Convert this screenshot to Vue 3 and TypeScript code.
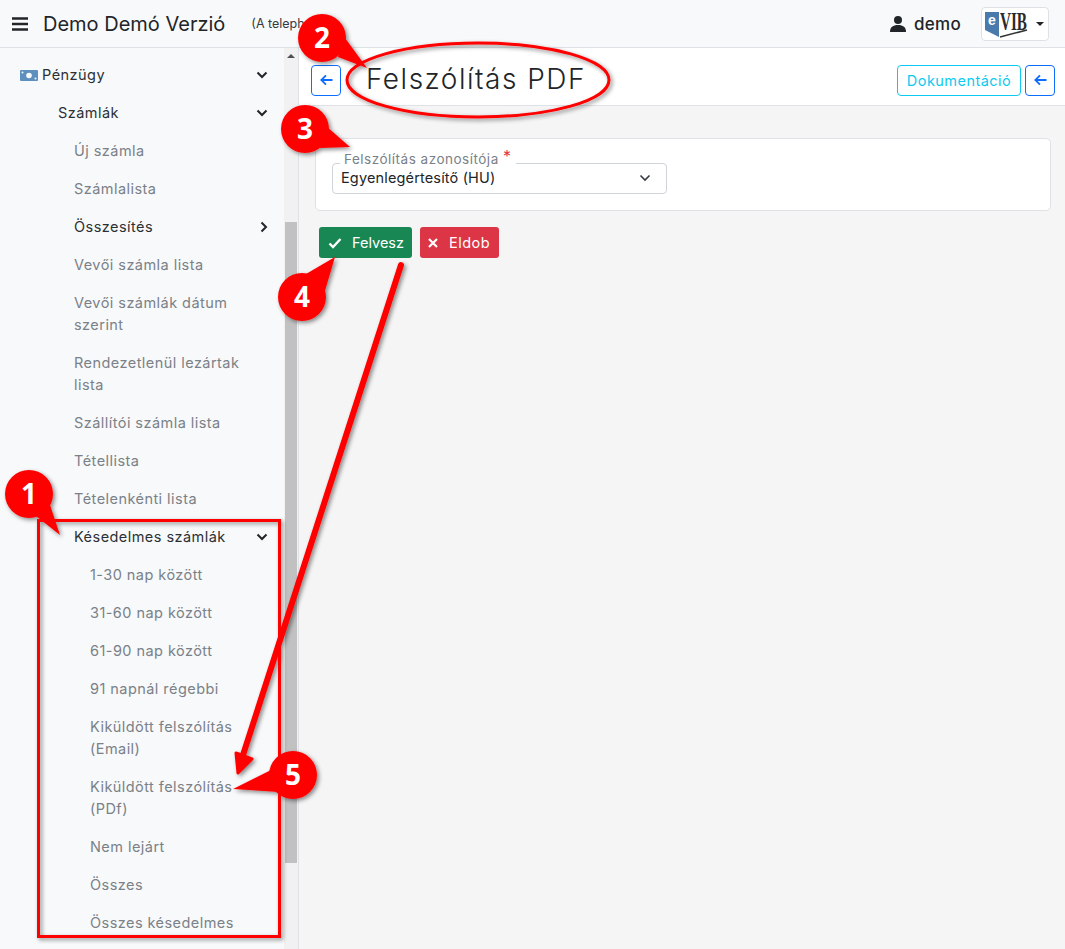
<script setup lang="ts">
interface Item { label: string; level: number; tone: 'dark' | 'muted'; chevron?: 'down' | 'right'; icon?: boolean; tall?: boolean }
const items: Item[] = [
  { label: 'Pénzügy', level: 0, tone: 'dark', chevron: 'down', icon: true },
  { label: 'Számlák', level: 1, tone: 'dark', chevron: 'down' },
  { label: 'Új számla', level: 2, tone: 'muted' },
  { label: 'Számlalista', level: 2, tone: 'muted' },
  { label: 'Összesítés', level: 2, tone: 'dark', chevron: 'right' },
  { label: 'Vevői számla lista', level: 2, tone: 'muted' },
  { label: 'Vevői számlák dátum szerint', level: 2, tone: 'muted', tall: true },
  { label: 'Rendezetlenül lezártak lista', level: 2, tone: 'muted', tall: true },
  { label: 'Szállítói számla lista', level: 2, tone: 'muted' },
  { label: 'Tétellista', level: 2, tone: 'muted' },
  { label: 'Tételenkénti lista', level: 2, tone: 'muted' },
  { label: 'Késedelmes számlák', level: 2, tone: 'dark', chevron: 'down' },
  { label: '1-30 nap között', level: 3, tone: 'muted' },
  { label: '31-60 nap között', level: 3, tone: 'muted' },
  { label: '61-90 nap között', level: 3, tone: 'muted' },
  { label: '91 napnál régebbi', level: 3, tone: 'muted' },
  { label: 'Kiküldött felszólítás (Email)', level: 3, tone: 'muted', tall: true },
  { label: 'Kiküldött felszólítás (PDf)', level: 3, tone: 'muted', tall: true },
  { label: 'Nem lejárt', level: 3, tone: 'muted' },
  { label: 'Összes', level: 3, tone: 'muted' },
  { label: 'Összes késedelmes', level: 3, tone: 'muted' }
]
interface Badge { n: string; cx: number; cy: number; tip: string }
const badges: Badge[] = [
  { n: '1', cx: 29, cy: 494, tip: '50,505 60,535 36,516' },
  { n: '2', cx: 322, cy: 38, tip: '345,38 367,68 338,57' },
  { n: '3', cx: 305, cy: 129, tip: '326,126 350,147 320,148' },
  { n: '4', cx: 302, cy: 297, tip: '306,274 335,257 324,294' },
  { n: '5', cx: 293, cy: 775, tip: '271,770 233,789 279,792' }
]
</script>

<template>
  <div class="page">
    <header class="topbar">
      <svg class="burger" viewBox="0 0 16 14" width="16" height="14"><path d="M0 1.5h16M0 7h16M0 12.500h16" stroke="#212529" stroke-width="2.400" /></svg>
      <span class="brand">Demo Demó Verzió</span>
      <span class="tagline">(A teleph</span>
      <span class="spacer"></span>
      <svg class="person" viewBox="0 0 16 16" width="16" height="16"><circle cx="8" cy="4" r="4" fill="#212529" /><path d="M0 16c0-5 3-7 8-7s8 2 8 7z" fill="#212529" /></svg>
      <span class="username">demo</span>
      <div class="logo-btn">
        <svg class="logo" viewBox="0 0 44 30" width="44" height="30">
          <path d="M0 3h14v25L0 21z" fill="#4a79ab" />
          <text x="3" y="16" class="logo-e">e</text>
          <text x="15" y="21" class="logo-vib" textLength="27" lengthAdjust="spacingAndGlyphs">VIB</text>
          <path d="M15 28L42 21" stroke="#333" stroke-width="1.500" />
        </svg>
        <i class="caret"></i>
      </div>
    </header>

    <div class="body">
      <aside class="sidebar">
        <nav class="menu">
          <div
            v-for="item in items"
            :key="item.label"
            class="row"
            :class="[`lvl${item.level}`, item.tone, { tall: item.tall }]"
          >
            <svg v-if="item.icon" class="money" viewBox="0 0 18 13" width="18" height="13">
              <rect y="1" width="18" height="11" rx="1" fill="#5d8fbf" />
              <circle cx="9" cy="6.500" r="2.800" fill="#f8f9fa" />
              <circle cx="2.500" cy="3.500" r="1" fill="#f8f9fa" />
              <circle cx="15.500" cy="9.500" r="1" fill="#f8f9fa" />
            </svg>
            <span class="row-label">{{ item.label }}</span>
            <svg v-if="item.chevron === 'down'" class="chev" viewBox="0 0 12 8" width="12" height="8"><path d="M1.500 1.500L6 6l4.500-4.500" fill="none" stroke="#212529" stroke-width="2" /></svg>
            <svg v-if="item.chevron === 'right'" class="chev" viewBox="0 0 8 12" width="8" height="12"><path d="M1.500 1.500L6 6l-4.500 4.500" fill="none" stroke="#212529" stroke-width="2" /></svg>
          </div>
        </nav>
        <div class="scrollbar">
          <i class="scroll-up"></i>
          <div class="thumb"></div>
        </div>
      </aside>

      <main class="main">
        <div class="titlebar">
          <button class="icon-btn" aria-label="Vissza">
            <svg viewBox="0 0 13 12" width="13" height="12"><path d="M12.500 6H1.500M6 1.300L1.300 6 6 10.700" fill="none" stroke="#0d6efd" stroke-width="1.800" /></svg>
          </button>
          <h1 class="title">Felszólítás PDF</h1>
          <span class="spacer"></span>
          <button class="doc-btn">Dokumentáció</button>
          <button class="icon-btn" aria-label="Vissza">
            <svg viewBox="0 0 13 12" width="13" height="12"><path d="M12.500 6H1.500M6 1.300L1.300 6 6 10.700" fill="none" stroke="#0d6efd" stroke-width="1.800" /></svg>
          </button>
        </div>

        <div class="content">
          <section class="card">
            <div class="field">
              <label class="float-label">Felszólítás azonosítója <em>*</em></label>
              <div class="select">
                <span>Egyenlegértesítő (HU)</span>
                <svg viewBox="0 0 12 8" width="12" height="8"><path d="M1.500 1.500L6 6l4.500-4.500" fill="none" stroke="#343a40" stroke-width="1.600" /></svg>
              </div>
            </div>
          </section>
          <div class="actions">
            <button class="btn ok">
              <svg viewBox="0 0 14 12" width="14" height="12"><path d="M1.500 6.500L5 10l7.500-8" fill="none" stroke="#fff" stroke-width="2.400" /></svg>
              <span>Felvesz</span>
            </button>
            <button class="btn cancel">
              <svg viewBox="0 0 10 10" width="10" height="10"><path d="M1 1l8 8M9 1l-8 8" fill="none" stroke="#fff" stroke-width="2.200" /></svg>
              <span class="wide">Eldob</span>
            </button>
          </div>
        </div>
      </main>
    </div>

    <svg class="notes" viewBox="0 0 1065 949" width="1065" height="949">
      <defs>
        <filter id="sh" x="-20%" y="-20%" width="140%" height="140%">
          <feDropShadow dx="2" dy="2" stdDeviation="2" flood-color="#000" flood-opacity="0.45" />
        </filter>
      </defs>
      <g filter="url(#sh)">
        <rect x="38.500" y="520.500" width="241" height="416" fill="none" stroke="#f00" stroke-width="3" />
        <ellipse cx="478" cy="80" rx="131" ry="37" fill="none" stroke="#f00" stroke-width="3" />
        <path d="M401 265L243 755" stroke="#f00" stroke-width="6" stroke-linecap="round" />
        <polygon points="238,773 236,753 252,759" fill="#f00" stroke="#f00" stroke-width="3" stroke-linejoin="round" />
        <g v-for="b in badges" :key="b.n">
          <polygon :points="b.tip" fill="#f00" />
          <circle :cx="b.cx" :cy="b.cy" r="24" fill="#f00" />
        </g>
      </g>
      <text v-for="b in badges" :key="'t' + b.n" :x="b.cx" :y="b.cy + 10" class="badge-no">{{ b.n }}</text>
    </svg>
  </div>
</template>

<style>
html, body { margin: 0; padding: 0; }
</style>

<style scoped>
.page {
  position: relative;
  width: 1065px;
  height: 949px;
  overflow: hidden;
  background: #f5f5f5;
  font-family: Inter, "Open Sans", sans-serif;
  color: #212529;
}
.topbar {
  height: 47px;
  border-bottom: 1px solid #dee2e6;
  background: #f8f9fa;
  display: flex;
  align-items: center;
  padding: 0 16px 0 12px;
}
.burger { margin-right: 15px; }
.brand { font-size: 20px; font-weight: 400; color: #212529; margin-right: 26px; white-space: nowrap; }
.tagline { font-size: 12.500px; color: #343a40; white-space: nowrap; }
.spacer { flex: 1; }
.person { margin-right: 8px; }
.username { font-size: 17px; font-weight: 500; letter-spacing: 0.3px; margin-right: 20px; }
.logo-btn {
  width: 68px;
  height: 34px;
  box-sizing: border-box;
  border: 1px solid #dee2e6;
  border-radius: 4px;
  background: #fff;
  display: flex;
  align-items: center;
  padding-left: 3px;
  gap: 7px;
}
.logo { overflow: visible; }
.logo-e { font: 700 14px "Liberation Sans", sans-serif; fill: #fff; }
.logo-vib { font: 700 25px "Liberation Serif", serif; fill: #2b2b2b; }
.caret { border-top: 4px solid #212529; border-left: 4px solid transparent; border-right: 4px solid transparent; }

.body { display: flex; height: 901px; }
.sidebar {
  width: 299px;
  flex: none;
  box-sizing: border-box;
  border-right: 1px solid #dee2e6;
  background: #f8f9fa;
  display: flex;
}
.menu { flex: 1; padding-top: 8px; min-width: 0; }
.row {
  height: 38px;
  display: flex;
  align-items: center;
  font-size: 14.500px;
  letter-spacing: 0.45px;
  line-height: 22px;
  padding-right: 16px;
  box-sizing: border-box;
}
.row.tall { height: 60px; }
.row-label { flex: 1; min-width: 0; }
.lvl0 { padding-left: 20px; }
.lvl1 { padding-left: 58px; }
.lvl2 { padding-left: 74px; }
.lvl3 { padding-left: 90px; }
.dark { color: #2b3035; }
.muted { color: #7a8188; }
.money { margin-right: 4px; flex: none; }
.chev { flex: none; }
.tall .row-label { padding-right: 24px; }

.scrollbar { width: 14px; flex: none; background: #f1f1f1; position: relative; }
.scroll-up { position: absolute; left: 3px; top: 6px; border-bottom: 4px solid #505050; border-left: 4px solid transparent; border-right: 4px solid transparent; }
.thumb { margin: 174px 1px 0 1px; height: 641px; background: #c1c1c1; }

.main { flex: 1; min-width: 0; }
.titlebar {
  height: 50px;
  padding: 7px 10px 0 12px;
  border-bottom: 1px solid #dee2e6;
  background: #fff;
  display: flex;
  align-items: center;
  gap: 4px;
}
.icon-btn {
  width: 30px;
  height: 31px;
  padding: 0;
  border: 1px solid #0d6efd;
  border-radius: 4px;
  background: #fff;
  display: flex;
  align-items: center;
  justify-content: center;
}
.title { margin: 0 0 0 21px; font-size: 28px; font-weight: 300; letter-spacing: 1.500px; line-height: 1.2; color: #212529; white-space: nowrap; }
.doc-btn {
  width: 124px;
  height: 31px;
  padding: 0;
  border: 1px solid #0dcaf0;
  border-radius: 4px;
  background: #fff;
  color: #0dcaf0;
  font: 400 14.500px Inter, sans-serif;
  letter-spacing: 0.45px;
}
.content { padding: 32px 14px 0 16px; }
.card {
  height: 73px;
  box-sizing: border-box;
  border: 1px solid #dee2e6;
  border-radius: 5px;
  background: #fff;
  padding: 24px 16px 0;
}
.field { position: relative; width: 335px; }
.float-label {
  position: absolute;
  left: 8px;
  top: -15px;
  background: #fff;
  padding: 0 4px;
  font-size: 13.500px;
  letter-spacing: 0.5px;
  line-height: 20px;
  color: #7a8188;
  white-space: nowrap;
}
.float-label em { color: #dc3545; font-style: normal; font-size: 16px; position: relative; top: -2px; }
.select {
  height: 31px;
  box-sizing: border-box;
  border: 1px solid #ced4da;
  border-radius: 4px;
  background: #fff;
  display: flex;
  align-items: center;
  justify-content: space-between;
  padding: 0 15px 2px 8px;
  font-size: 14.500px;
  letter-spacing: 0.15px;
}
.actions { display: flex; gap: 8px; margin: 16px 0 0 4px; }
.btn {
  height: 31px;
  border: 0;
  border-radius: 3px;
  color: #fff;
  display: flex;
  align-items: center;
  font: 400 14.500px Inter, sans-serif;
  padding: 0;
}
.wide { letter-spacing: 0.5px; }
.ok { width: 93px; background: #198754; padding-left: 9px; gap: 10px; }
.cancel { width: 79px; background: #dc3545; padding-left: 8px; gap: 11px; }

.notes { position: absolute; left: 0; top: 0; pointer-events: none; }
.badge-no { font: 700 28px "Open Sans", sans-serif; fill: #fff; text-anchor: middle; }
</style>
